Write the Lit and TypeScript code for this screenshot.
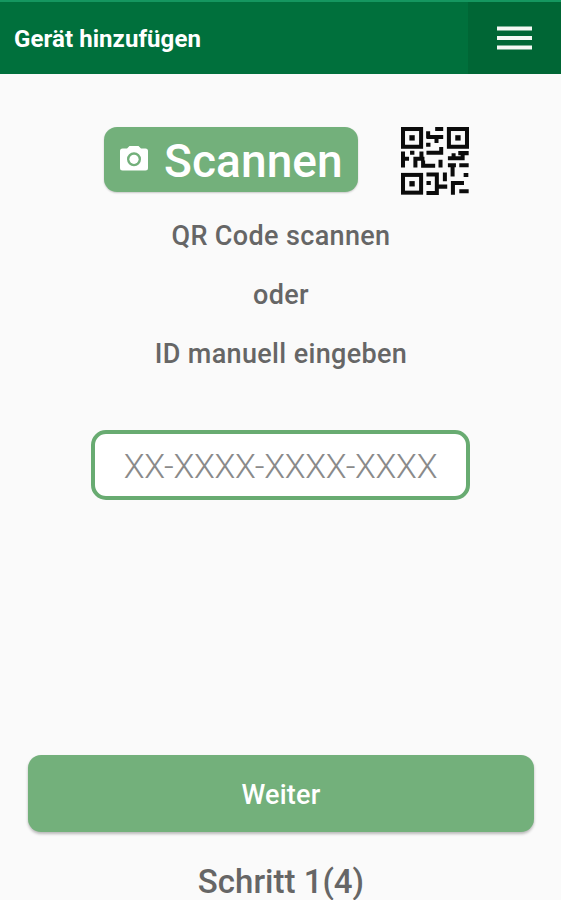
import { LitElement, html, css, svg } from "lit";
import { customElement } from "lit/decorators.js";

@customElement("qr-code")
export class QrCode extends LitElement {
  static styles = css`
    :host { display: block; width: 68px; height: 68px; }
    svg { display: block; width: 100%; height: 100%; }
  `;
  render() {
    return html`<svg viewBox="0 0 203 203" fill="none" stroke="#0b0b0b" stroke-width="12">
      ${[[6, 6], [143, 6], [6, 143]].map(([x, y]) => svg`
        <rect x=${x} y=${y} width="54" height="53"></rect>
        <rect x=${x + 19} y=${y + 18.5} width="16" height="16" fill="#0b0b0b" stroke="none"></rect>`)}
      <path d="M102 6h24M81 13v20M76 30h50M106 30v18M75 53h13
        M76 77h50M120 60v23M118 98v23
        M6 73v48M6 95h18M27 77h13M43 121v-26h27M61 73v28M66 100v16h36
        M140 93h50M157 93v-15M184 93v-15h18M171 78h13
        M140 114h24M154 114v34M174 114h28M187 143h14
        M131 136v26M76 142h31v55h-31M76 167h13M108 178h30
        M155 202v-35h33M174 192h28"></path>
    </svg>`;
  }
}

@customElement("app-root")
export class AppRoot extends LitElement {
  static styles = css`
    :host {
      display: flex; flex-direction: column; box-sizing: border-box;
      height: 900px; overflow: hidden; background: #fafafa; color: #666;
      font-family: Roboto, sans-serif; font-weight: 500;
    }
    * { box-sizing: border-box; }
    header {
      display: flex; flex: none; height: 74px; border-top: 2px solid #159760;
      background: #00703c; color: #fff; align-items: center;
    }
    h1 { margin: 2px 0 0 14px; flex: 1; font-size: 24px; font-weight: 700; line-height: 72px; letter-spacing: 0.08px; }
    h1 span, .scan span, p span, .next span, .step span { display: inline-block; white-space: nowrap; }
    .menu {
      width: 93px; height: 72px; padding: 0 0 0 29px; border: 0; background: #006635;
      display: flex; align-items: center;
    }
    .menu svg { width: 35px; height: 26px; }
    .top { display: flex; margin: 53px 0 0 104px; gap: 43px; height: 68px; flex: none; }
    .scan {
      width: 254px; height: 65px; padding: 0 0 0 16px; border: 0; border-radius: 13px;
      background: #73b07b; color: #fff; display: flex; align-items: center;
      font: 500 46px/65px Roboto, sans-serif; box-shadow: 0 1px 2px #0003;
    }
    .scan svg { width: 28px; height: 26px; margin: 0 16px 3px 0; flex: none; }
    .scan span { padding-top: 3px; letter-spacing: 0.1px; }
    p { margin: 0; text-align: center; font-size: 27px; line-height: 59px; height: 59px; letter-spacing: 0.35px; }
    .hints { margin: 12px 0 0 1px; }
    .field {
      width: 379px; height: 70px; margin: 46px 0 0 91px; border: 4px solid #68ab71;
      border-radius: 15px; background: #fff; padding: 2px 0 0; text-align: center; flex: none;
      font: 300 34px Roboto, sans-serif; letter-spacing: -0.3px; color: #333;
    }
    .field::placeholder { color: #8a8a8a; opacity: 1; }
    .next {
      width: 506px; height: 77px; margin: auto 0 0 28px; padding: 3px 0 0; border: 0; border-radius: 13px; flex: none;
      background: #73b07b; color: #fff; font: 500 27px Roboto, sans-serif; letter-spacing: 0.2px; box-shadow: 0 2px 3px #0004;
    }
    .step { height: 68px; padding: 31px 0 0 1px; line-height: 37px; text-align: center; font-size: 33px; flex: none; }
  `;
  render() {
    return html`
      <header>
        <h1><span>Gerät hinzufügen</span></h1>
        <button class="menu" aria-label="Menü">
          <svg viewBox="0 0 35 26"><path d="M0 3.5h35M0 13h35M0 22.5h35" stroke="#f4f8f4" stroke-width="4"></path></svg>
        </button>
      </header>
      <div class="top">
        <button class="scan">
          <svg viewBox="0 0 28 26" fill="#fff"><path fill-rule="evenodd" d="M9.5 1h9l2.5 2.5h4.5q2.5 0 2.5 2.5v17q0 2.5-2.5 2.5h-23Q0 25.500 0 23v-17Q0 3.500 2.500 3.500H7zM14 7.300a7 7 0 1 0 0 14 7 7 0 0 0 0-14z"></path><circle cx="14" cy="14.300" r="4.600"></circle></svg>
          <span>Scannen</span>
        </button>
        <qr-code></qr-code>
      </div>
      <div class="hints">
        <p><span>QR Code scannen</span></p>
        <p><span>oder</span></p>
        <p><span>ID manuell eingeben</span></p>
      </div>
      <input class="field" placeholder="XX-XXXX-XXXX-XXXX" />
      <button class="next"><span>Weiter</span></button>
      <div class="step"><span>Schritt 1(4)</span></div>
    `;
  }
}
